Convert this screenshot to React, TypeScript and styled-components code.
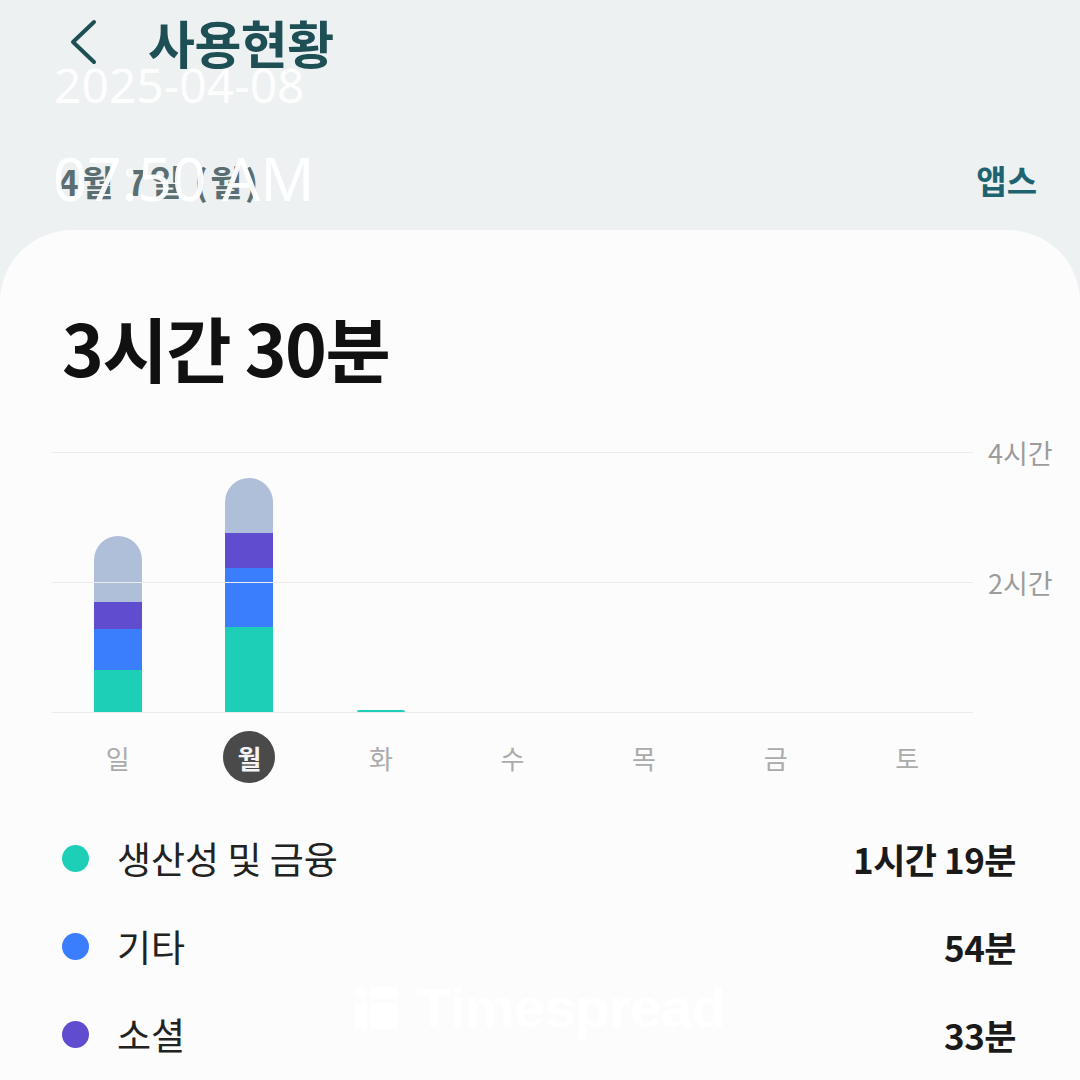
import * as React from "react";
import styled, { createGlobalStyle } from "styled-components";

const GlobalStyle = createGlobalStyle`
  html, body {
    margin: 0;
    padding: 0;
    background: #edf1f2;
  }
  body {
    font-family: "Noto Sans CJK KR", "Noto Sans", sans-serif;
  }
`;

type Segment = { color: string; height: number };
type Day = { label: string; selected?: boolean; segments: Segment[] };

const COLORS = {
  productivity: "#1ecfb8",
  other: "#3a7efd",
  social: "#5f4ccf",
  rest: "#b0bfd9",
};

const days: Day[] = [
  {
    label: "일",
    segments: [
      { color: COLORS.productivity, height: 42 },
      { color: COLORS.other, height: 41 },
      { color: COLORS.social, height: 27 },
      { color: COLORS.rest, height: 66 },
    ],
  },
  {
    label: "월",
    selected: true,
    segments: [
      { color: COLORS.productivity, height: 85 },
      { color: COLORS.other, height: 59 },
      { color: COLORS.social, height: 35 },
      { color: COLORS.rest, height: 55 },
    ],
  },
  { label: "화", segments: [{ color: COLORS.productivity, height: 2 }] },
  { label: "수", segments: [] },
  { label: "목", segments: [] },
  { label: "금", segments: [] },
  { label: "토", segments: [] },
];

const legend = [
  { color: COLORS.productivity, name: "생산성 및 금융", value: "1시간 19분" },
  { color: COLORS.other, name: "기타", value: "54분" },
  { color: COLORS.social, name: "소셜", value: "33분" },
];

const Page = styled.div`
  position: relative;
  width: 1080px;
  height: 1080px;
  overflow: hidden;
  background: #edf1f2;
`;

const Header = styled.div`
  display: flex;
  align-items: center;
  height: 84px;
  padding-left: 64px;
  gap: 46px;
`;

const BackButton = styled.button`
  display: flex;
  align-items: center;
  justify-content: center;
  width: 38px;
  height: 50px;
  padding: 0;
  border: none;
  background: none;
  color: #1e4f55;
`;

const Title = styled.h1`
  margin: 0;
  font-size: 51px;
  font-weight: 700;
  color: #1e4f55;
  letter-spacing: -0.5px;
`;

const SubBar = styled.div`
  display: flex;
  justify-content: space-between;
  align-items: center;
  height: 60px;
  margin-top: 66px;
  padding: 0 43px 0 58px;
`;

const DateLabel = styled.span`
  font-size: 35px;
  font-weight: 700;
  color: #5b6e71;
  letter-spacing: 2.5px;
`;

const AppsLink = styled.span`
  font-size: 33px;
  font-weight: 700;
  color: #1e6470;
`;

const Card = styled.div`
  margin-top: 20px;
  height: 860px;
  background: #fcfcfc;
  border-radius: 72px 72px 0 0;
`;

const Total = styled.div`
  padding: 71px 0 0 62px;
  font-size: 71px;
  font-weight: 700;
  line-height: 90px;
  color: #111;
  letter-spacing: -1.5px;
`;

const Chart = styled.div`
  display: flex;
  margin-top: 61px;
  margin-left: 52px;
`;

const Plot = styled.div`
  position: relative;
  width: 921px;
`;

const GridLine = styled.div<{ $top: number }>`
  position: absolute;
  left: 0;
  right: 0;
  top: ${(p) => p.$top}px;
  height: 1px;
  background: #ececec;
`;

const BarRow = styled.div`
  display: grid;
  grid-template-columns: repeat(7, 1fr);
  height: 260px;
  align-items: end;
`;

const BarSlot = styled.div`
  display: flex;
  justify-content: center;
  align-items: flex-end;
  height: 100%;
`;

const Bar = styled.div`
  display: flex;
  flex-direction: column-reverse;
  width: 48px;
  border-radius: 24px 24px 0 0;
  overflow: hidden;
`;

const BarSegment = styled.div`
  width: 100%;
`;

const DayRow = styled.div`
  display: grid;
  grid-template-columns: repeat(7, 1fr);
  margin-top: 19px;
`;

const DayCell = styled.div`
  display: flex;
  justify-content: center;
`;

const DayLabel = styled.span<{ $selected?: boolean }>`
  display: flex;
  align-items: center;
  justify-content: center;
  width: 52px;
  height: 52px;
  border-radius: 50%;
  font-size: 26px;
  font-weight: ${(p) => (p.$selected ? 700 : 400)};
  color: ${(p) => (p.$selected ? "#f4f4f4" : "#ababab")};
  background: ${(p) => (p.$selected ? "#4a4a4a" : "transparent")};
`;

const Axis = styled.div`
  position: relative;
  width: 90px;
  height: 260px;
`;

const AxisLabel = styled.span<{ $top: number }>`
  position: absolute;
  left: 15px;
  top: ${(p) => p.$top}px;
  transform: translateY(-50%);
  font-size: 27px;
  color: #9c9c9c;
  white-space: nowrap;
`;

const Legend = styled.div`
  display: flex;
  flex-direction: column;
  margin-top: 31px;
  padding: 0 64px 0 62px;
`;

const LegendRow = styled.div`
  display: flex;
  align-items: center;
  height: 88px;
`;

const Dot = styled.span<{ $color: string }>`
  width: 27px;
  height: 27px;
  border-radius: 50%;
  background: ${(p) => p.$color};
  margin-right: 28px;
`;

const LegendName = styled.span`
  flex: 1;
  font-size: 37px;
  color: #222;
`;

const LegendValue = styled.span`
  font-size: 35px;
  font-weight: 700;
  color: #1a1a1a;
  letter-spacing: -0.5px;
`;

const StampDate = styled.div`
  position: absolute;
  left: 54px;
  top: 51px;
  font-family: "Noto Sans", "Open Sans", sans-serif;
  font-size: 48px;
  line-height: 1.4;
  color: rgba(255, 255, 255, 0.92);
`;

const StampTime = styled.div`
  position: absolute;
  left: 53px;
  top: 136px;
  font-family: "Noto Sans", "Open Sans", sans-serif;
  font-size: 60px;
  line-height: 1.4;
  color: rgba(255, 255, 255, 0.95);
`;

const Watermark = styled.div`
  position: absolute;
  left: 355px;
  top: 975px;
  display: flex;
  align-items: center;
  gap: 18px;
  color: rgba(255, 255, 255, 0.9);
  font-family: "Liberation Sans", Arial, sans-serif;
  font-size: 56px;
  font-weight: 700;
  letter-spacing: -0.5px;
`;

const ChevronLeft = () => (
  <svg width="34" height="46" viewBox="0 0 34 46" fill="none">
    <path
      d="M28 3 L7 23 L28 43"
      stroke="currentColor"
      strokeWidth="4"
      strokeLinecap="round"
      strokeLinejoin="round"
    />
  </svg>
);

const TimespreadMark = () => (
  <svg width="44" height="42" viewBox="0 0 44 42">
    <circle cx="6" cy="6" r="6" fill="currentColor" />
    <rect x="15" y="0" width="28" height="12" fill="currentColor" />
    <rect x="0" y="16" width="12" height="26" fill="currentColor" />
    <rect x="15" y="16" width="28" height="26" fill="currentColor" />
  </svg>
);

const App: React.FC = () => {
  return (
    <Page>
      <GlobalStyle />
      <Header>
        <BackButton aria-label="뒤로">
          <ChevronLeft />
        </BackButton>
        <Title>사용현황</Title>
      </Header>
      <SubBar>
        <DateLabel>4월 7일 (월)</DateLabel>
        <AppsLink>앱스</AppsLink>
      </SubBar>
      <Card>
        <Total>3시간 30분</Total>
        <Chart>
          <Plot>
            <GridLine $top={0} />
            <GridLine $top={130} />
            <GridLine $top={260} />
            <BarRow>
              {days.map((d) => (
                <BarSlot key={d.label}>
                  {d.segments.length > 0 && (
                    <Bar>
                      {d.segments.map((s, i) => (
                        <BarSegment
                          key={i}
                          style={{ height: s.height, background: s.color }}
                        />
                      ))}
                    </Bar>
                  )}
                </BarSlot>
              ))}
            </BarRow>
            <DayRow>
              {days.map((d) => (
                <DayCell key={d.label}>
                  <DayLabel $selected={d.selected}>{d.label}</DayLabel>
                </DayCell>
              ))}
            </DayRow>
          </Plot>
          <Axis>
            <AxisLabel $top={0}>4시간</AxisLabel>
            <AxisLabel $top={130}>2시간</AxisLabel>
          </Axis>
        </Chart>
        <Legend>
          {legend.map((l) => (
            <LegendRow key={l.name}>
              <Dot $color={l.color} />
              <LegendName>{l.name}</LegendName>
              <LegendValue>{l.value}</LegendValue>
            </LegendRow>
          ))}
        </Legend>
      </Card>
      <StampDate>2025-04-08</StampDate>
      <StampTime>07:50 AM</StampTime>
      <Watermark>
        <TimespreadMark />
        Timespread
      </Watermark>
    </Page>
  );
};

export default App;
